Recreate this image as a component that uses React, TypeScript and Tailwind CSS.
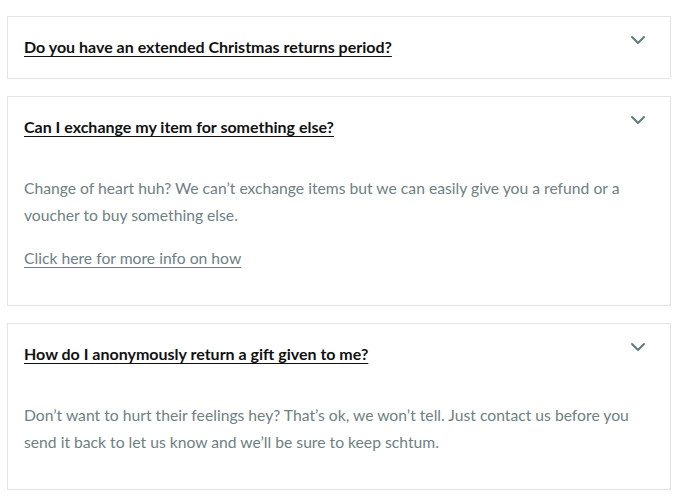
import React from 'react';

type Faq = {
  q: string;
  a?: string[];
  link?: string;
};

const FAQS: Faq[] = [
  { q: 'Do you have an extended Christmas returns period?' },
  {
    q: 'Can I exchange my item for something else?',
    a: ['Change of heart huh? We can\u2019t exchange items but we can easily give you a refund or a voucher to buy something else.'],
    link: 'Click here for more info on how',
  },
  {
    q: 'How do I anonymously return a gift given to me?',
    a: ['Don\u2019t want to hurt their feelings hey? That\u2019s ok, we won\u2019t tell. Just contact us before you send it back to let us know and we\u2019ll be sure to keep schtum.'],
  },
];

const Chevron = () => (
  <svg width="16" height="10" viewBox="0 0 16 10" fill="none" className="mt-[18px] mr-[8px] shrink-0">
    <path d="M2 2l6 6 6-6" stroke="#5f7a7d" strokeWidth="2" strokeLinecap="round" strokeLinejoin="round" />
  </svg>
);

const App: React.FC = () => {
  return (
    <div className="min-h-screen bg-white px-[7px] pt-4 font-['Lato','Noto_Sans',sans-serif]">
      <div className="flex flex-col gap-[17px] w-[664px]">
        {FAQS.map((f) => (
          <div key={f.q} className="border border-[#e3e5e5] bg-white px-4">
            <div className="flex justify-between items-start h-[61px]">
              <h3 className="pt-[18px] text-[16px] leading-6 font-bold text-[#111] underline underline-offset-[3px] decoration-1">
                {f.q}
              </h3>
              <Chevron />
            </div>
            {f.a && (
              <div className="mt-[17px] pb-[33px] text-[15.7px] leading-[27px] text-[#6e8083] space-y-4">
                {f.a.map((p) => (
                  <p key={p}>{p}</p>
                ))}
                {f.link && (
                  <p>
                    <a href="#" className="underline underline-offset-[3px] decoration-1">{f.link}</a>
                  </p>
                )}
              </div>
            )}
          </div>
        ))}
      </div>
    </div>
  );
};

export default App;
